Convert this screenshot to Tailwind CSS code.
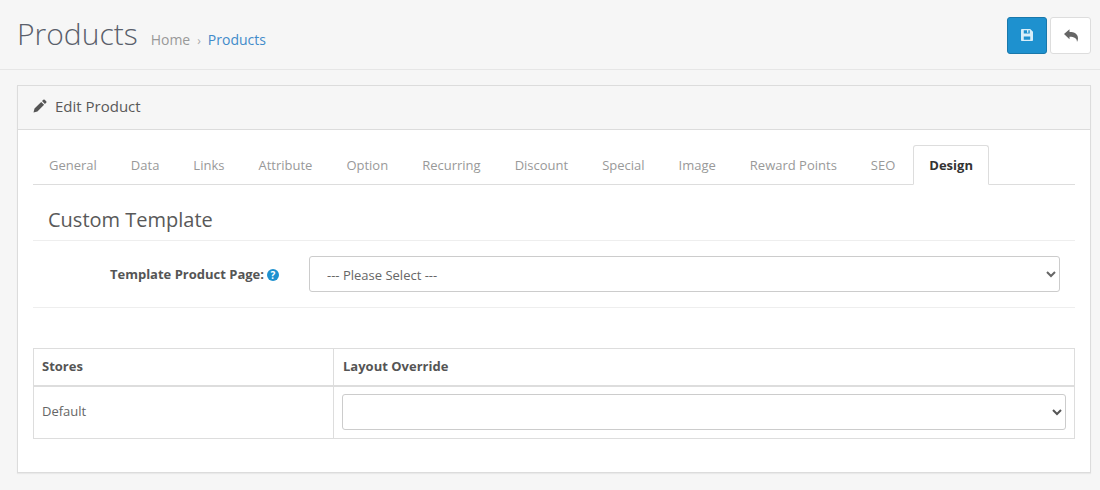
<!doctype html>
<html>
<head>
<meta charset="utf-8">
<script src="https://cdn.jsdelivr.net/npm/@tailwindcss/browser@4"></script>
</head>
<body class="bg-[#f6f6f6] font-['Open_Sans',sans-serif] text-[13px] text-[#666] w-[1100px] h-[490px] overflow-hidden">
<header class="h-[70px] border-b border-[#e6e6e6] flex items-center justify-between pl-[17px] pr-[9px]">
  <div class="flex items-baseline -mt-[2px]">
    <h1 class="text-[30px] leading-[36px] font-light text-[#5a5f6b] m-0">Products</h1>
    <nav class="flex items-baseline ml-[13px] text-[14px]">
      <span class="text-[#999]">Home</span>
      <span class="text-[#aaa] text-[12px] ml-[7px] mr-[7px]">›</span>
      <span class="text-[#428bca]">Products</span>
    </nav>
  </div>
  <div class="flex gap-[3px] mt-[1px]">
    <button class="w-[40px] h-[37px] rounded-[3px] bg-[#1e91cf] border border-[#1978ab] flex items-center justify-center">
      <svg width="12" height="12" viewBox="0 0 13 13" fill="#d9eef9"><path fill-rule="evenodd" d="M1.2 0H10l3 3v8.800c0 .7-.5 1.200-1.200 1.200H1.200C.5 13 0 12.500 0 11.800V1.200C0 .5.500 0 1.200 0ZM3 1.300V5h6.500V1.300H8v2.700H6.500V1.300ZM3 8v3.700h7V8Z"/></svg>
    </button>
    <button class="w-[41px] h-[37px] rounded-[3px] bg-white border border-[#ddd] flex items-center justify-center">
      <svg width="14" height="13" viewBox="0 0 14 13" fill="#666"><path d="M0 5 5.500.2V3c5 0 8.500 1.800 8.500 6.500 0 1.300-.4 2.500-1 3.500.1-3.800-2.800-5.300-7.500-5.300v2.600Z"/></svg>
    </button>
  </div>
</header>
<main class="mt-[15px] mx-[17px] w-[1074px] h-[388px] bg-white border border-[#dcdcdc] shadow-[0_1px_1px_rgba(0,0,0,0.05)] flex flex-col">
  <div class="h-[44px] shrink-0 bg-[#f6f6f6] border-b border-[#dcdcdc] flex items-center pl-[15px] gap-[8px]">
    <svg class="-mt-[3px]" width="14" height="14" viewBox="0 0 14 14" fill="#555"><path d="M10.300.8a1 1 0 0 1 1.400 0l1.500 1.500a1 1 0 0 1 0 1.400L11.900 5 9 2.100ZM8.200 2.900l2.900 2.900L4.400 12.500 .5 13.500l1-3.900Z"/></svg>
    <span class="text-[15px] leading-[20px] -mt-[4px] text-[#595959]">Edit Product</span>
  </div>
  <div class="px-[15px] pt-[15px] flex flex-col">
    <ul class="flex h-[40px] border-b border-[#ddd] text-[#999]">
      <li class="pl-[16px] pr-[17px] leading-[40px]">General</li>
      <li class="px-[17px] leading-[40px]">Data</li>
      <li class="px-[17px] leading-[40px]">Links</li>
      <li class="px-[17px] leading-[40px]">Attribute</li>
      <li class="px-[17px] leading-[40px]">Option</li>
      <li class="px-[17px] leading-[40px]">Recurring</li>
      <li class="px-[17px] leading-[40px]">Discount</li>
      <li class="px-[17px] leading-[40px]">Special</li>
      <li class="px-[17px] leading-[40px]">Image</li>
      <li class="px-[17px] leading-[40px]">Reward Points</li>
      <li class="pl-[17px] pr-[18px] leading-[40px]">SEO</li>
      <li class="h-[40px] px-[15px] leading-[38px] bg-white border border-[#ddd] border-b-white rounded-t-[3px] font-bold text-[#333]">Design</li>
    </ul>
    <h2 class="h-[56px] border-b border-[#eee] pl-[15px] pt-[20px] text-[20px] leading-[30px] text-[#595959] font-normal">Custom Template</h2>
    <div class="h-[67px] border-b border-[#eee] flex items-center">
      <div class="w-[246px] flex justify-end items-center gap-[3px] font-bold text-[#555] mt-[2px]">
        <span>Template Product Page:</span>
        <span class="w-[12px] h-[12px] rounded-full bg-[#1e91cf] text-white text-[10px] leading-[12px] text-center">?</span>
      </div>
      <select class="ml-[30px] w-[751px] h-[36px] rounded-[3px] border border-[#ccc] bg-white pl-[13px] pt-[1px] text-[#666] text-[13px]">
        <option>--- Please Select ---</option>
      </select>
    </div>
    <table class="mt-[40px] w-[1042px] border-collapse table-fixed text-[#555]">
      <tbody>
        <tr class="h-[37px]">
          <th class="w-[300px] border border-[#ddd] border-b-2 text-left font-bold pl-[8px]">Stores</th>
          <th class="border border-[#ddd] border-b-2 text-left font-bold pl-[9px]">Layout Override</th>
        </tr>
        <tr class="h-[53px]">
          <td class="border border-[#ddd] px-[8px] pb-[2px] text-[#666]">Default</td>
          <td class="border border-[#ddd] px-[8px]"><select class="block w-full h-[36px] rounded-[3px] border border-[#ccc] bg-white"><option></option></select></td>
        </tr>
      </tbody>
    </table>
  </div>
</main>
</body>
</html>
